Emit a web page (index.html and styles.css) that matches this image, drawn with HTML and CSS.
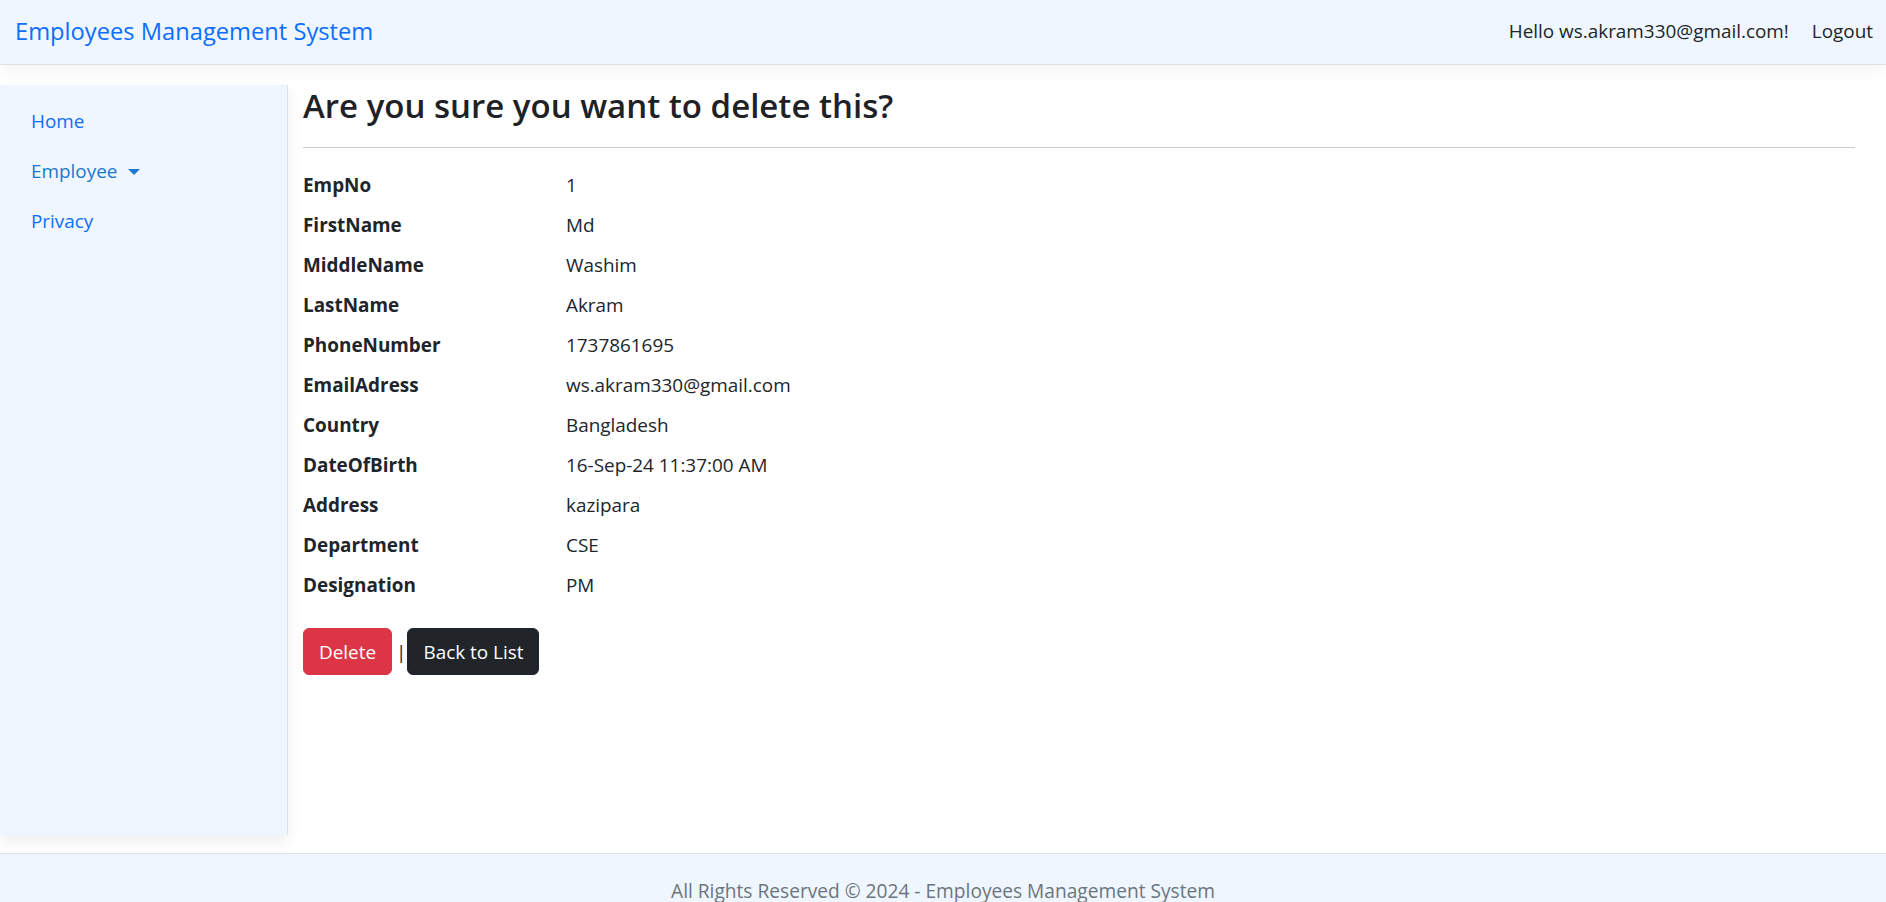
FILE: index.html
```html
<!DOCTYPE html>
<html lang="en">
<head>
<meta charset="utf-8">
<title>Delete - Employees Management System</title>
<link rel="stylesheet" href="styles.css">
</head>
<body>
<header class="topbar">
  <a class="brand" href="#">Employees Management System</a>
  <nav class="user-nav">
    <span class="hello">Hello ws.akram330@gmail.com!</span>
    <a class="logout" href="#">Logout</a>
  </nav>
</header>
<div class="layout">
  <aside class="sidebar">
    <ul class="side-nav">
      <li><a class="side-link" href="#">Home</a></li>
      <li><a class="side-link dropdown" href="#">Employee<span class="caret"></span></a></li>
      <li><a class="side-link" href="#">Privacy</a></li>
    </ul>
  </aside>
  <main class="content">
    <h3 class="title">Are you sure you want to delete this?</h3>
    <hr class="rule">
    <dl class="details">
      <dt>EmpNo</dt><dd>1</dd>
      <dt>FirstName</dt><dd>Md</dd>
      <dt>MiddleName</dt><dd>Washim</dd>
      <dt>LastName</dt><dd>Akram</dd>
      <dt>PhoneNumber</dt><dd>1737861695</dd>
      <dt>EmailAdress</dt><dd>ws.akram330@gmail.com</dd>
      <dt>Country</dt><dd>Bangladesh</dd>
      <dt>DateOfBirth</dt><dd>16-Sep-24 11:37:00 AM</dd>
      <dt>Address</dt><dd>kazipara</dd>
      <dt>Department</dt><dd>CSE</dd>
      <dt>Designation</dt><dd>PM</dd>
    </dl>
    <form class="actions">
      <button type="button" class="btn btn-danger">Delete</button><span class="sep">|</span><a class="btn btn-dark" href="#">Back to List</a>
    </form>
  </main>
</div>
<footer class="footer">All Rights Reserved © 2024 - Employees Management System</footer>
</body>
</html>
```
FILE: styles.css
```css
* { box-sizing: border-box; }
html, body { margin: 0; padding: 0; }
body {
  font-family: "Open Sans", "Noto Sans", sans-serif;
  font-size: 18.9px;
  line-height: 30px;
  color: #212529;
  background: #fff;
  overflow: hidden;
}
a { text-decoration: none; }

.topbar {
  height: 65px;
  background: #eff6ff;
  border-bottom: 1px solid #dde1e6;
  box-shadow: 0 5px 16px rgba(0,0,0,0.05);
  display: flex;
  align-items: center;
  justify-content: space-between;
  padding: 0 13px 0 15px;
  position: relative;
  z-index: 2;
}
.brand {
  color: #0d6efd;
  font-size: 23.7px;
  line-height: 36px;
  padding-bottom: 3px;
}
.user-nav {
  display: flex;
  align-items: center;
  gap: 23px;
  padding-bottom: 3px;
}
.hello, .logout { color: #212529; }

.layout {
  display: flex;
  margin-top: 20px;
}
.sidebar {
  width: 288px;
  flex: 0 0 288px;
  height: 750px;
  background: #eff6ff;
  border-right: 1px solid #dfe3e8;
  box-shadow: 0 6px 14px rgba(0,0,0,0.07);
  padding: 11px 11px;
}
.side-nav { list-style: none; margin: 0; padding: 0; }
.side-link {
  display: block;
  padding: 10px 20px;
  color: #0d6efd;
}
.side-link.dropdown { color: #1a78d2; }
.caret {
  display: inline-block;
  margin-left: 11px;
  vertical-align: 3px;
  border-top: 6px solid currentColor;
  border-left: 6px solid transparent;
  border-right: 6px solid transparent;
}

.content {
  flex: 1;
  padding: 0 31px 0 15px;
}
.title {
  margin: 0 0 10px;
  font-size: 33px;
  line-height: 42px;
  font-weight: 600;
  color: #1e2226;
}
.rule {
  margin: 20px 0;
  border: 0;
  border-top: 1px solid #c8c9cb;
}
.details {
  display: grid;
  grid-template-columns: 263px 1fr;
  margin: 0 0 20px;
  padding-top: 2px;
}
.details dt {
  font-weight: 700;
  margin: 0 0 10px;
}
.details dd {
  margin: 0 0 10px;
}
.actions {
  margin: 0;
  margin-top: -2px;
  display: flex;
  align-items: center;
}
.btn {
  display: inline-block;
  font-family: inherit;
  font-size: 18.9px;
  line-height: 30px;
  padding: 7.5px 15px;
  border: 1px solid transparent;
  border-radius: 6px;
  color: #fff;
  cursor: pointer;
}
.btn-danger { background: #dc3545; border-color: #dc3545; }
.btn-dark { background: #212529; border-color: #212529; }
.sep {
  margin: 0 1px 0 4px;
  line-height: 30px;
}

.footer {
  margin-top: 18px;
  border-top: 1px solid #dde1e6;
  background: #eff6ff;
  color: #6c757d;
  font-size: 19.15px;
  text-align: center;
  line-height: 75px;
  white-space: nowrap;
}
```
